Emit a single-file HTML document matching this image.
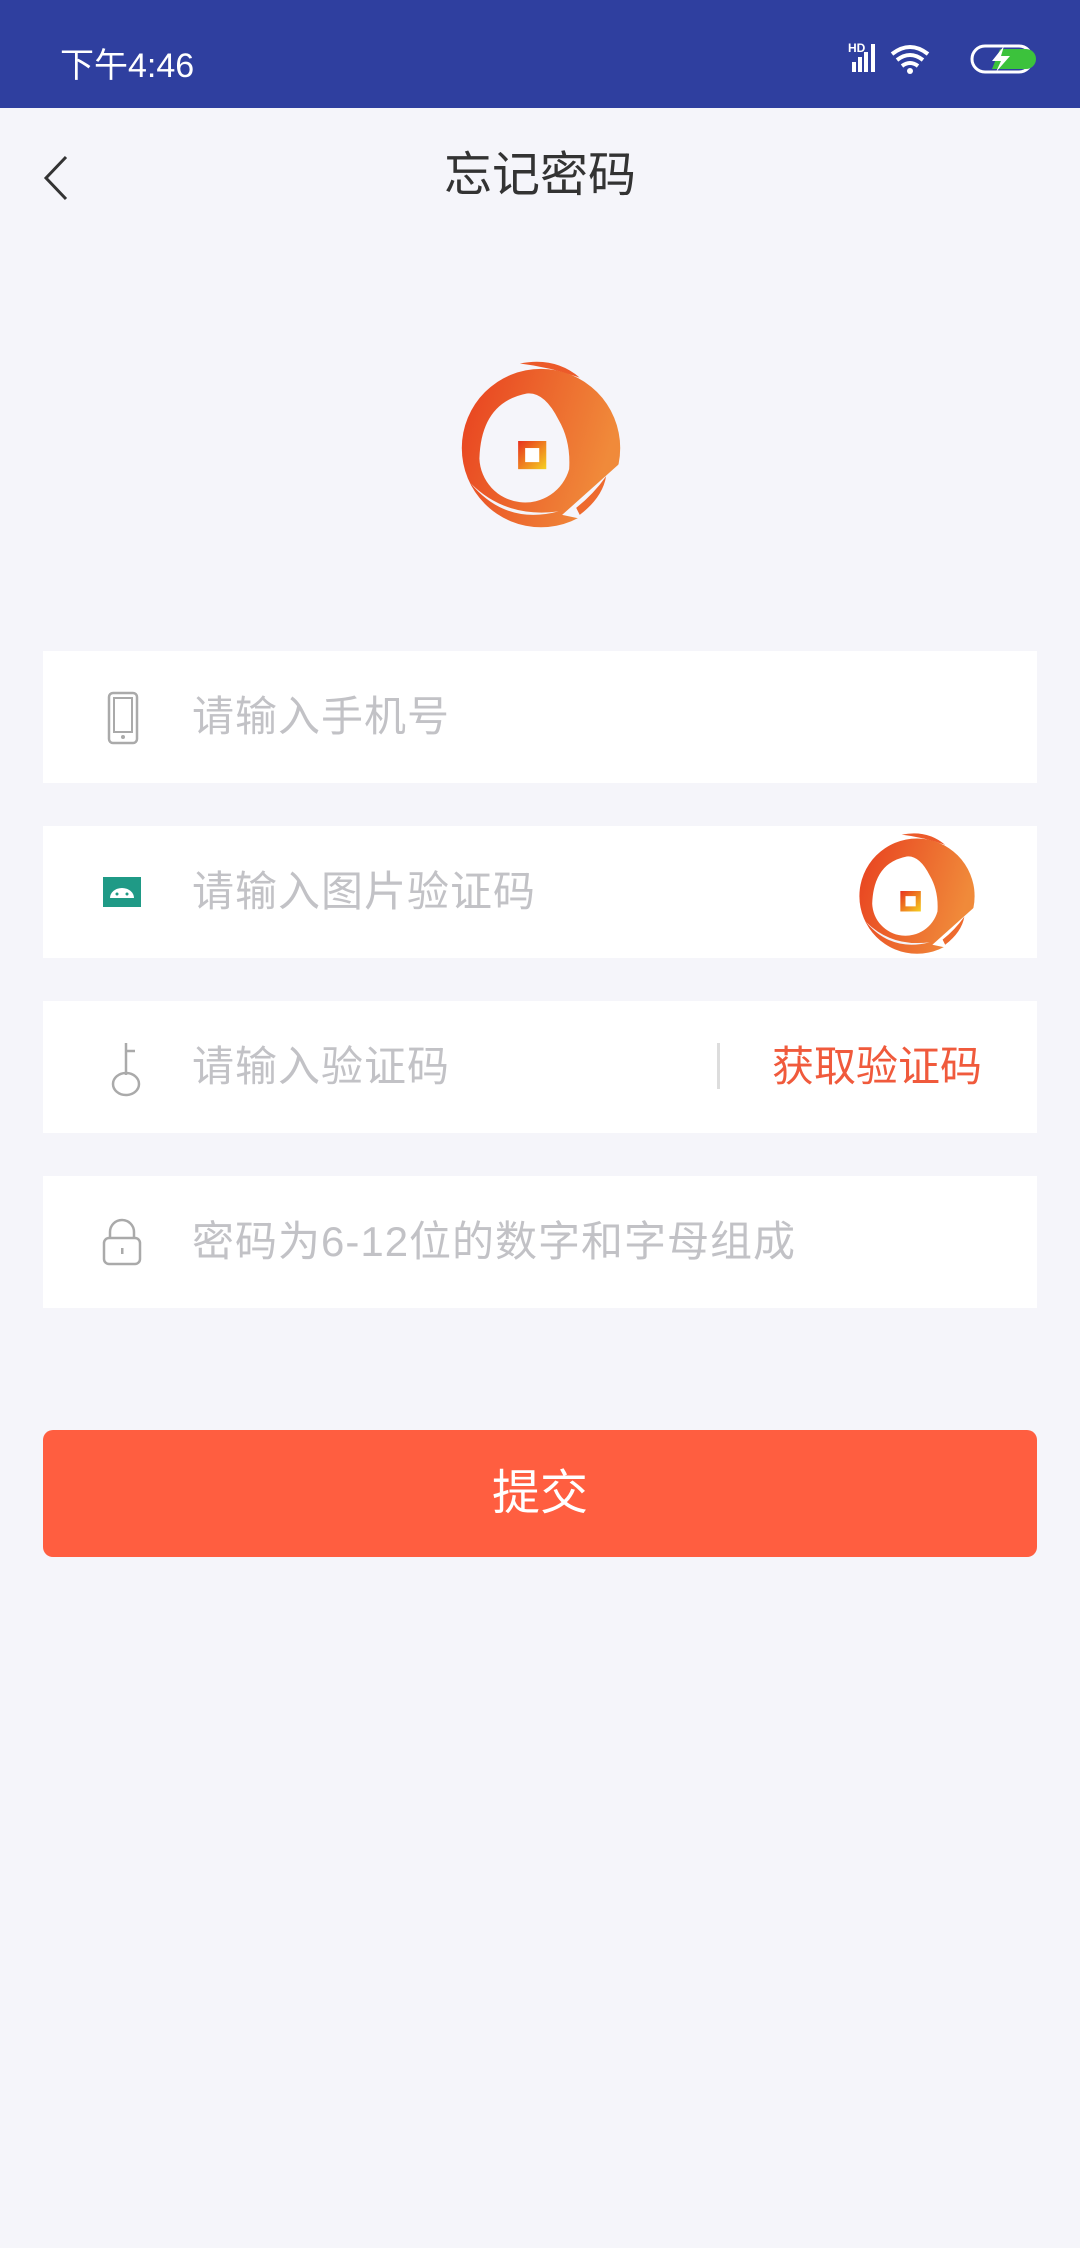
<!DOCTYPE html>
<html><head><meta charset="utf-8">
<style>
body{margin:0;width:1080px;height:2248px;background:#f5f5fa;font-family:"Liberation Sans","Noto Sans CJK SC",sans-serif;position:relative;overflow:hidden}
.abs{position:absolute}
.sb{left:0;top:0;width:1080px;height:108px;background:#2f3f9f}
.field{position:absolute;left:43px;width:994px;height:132px;background:#fff}
.ph{position:absolute;left:149px;top:0;line-height:132px;font-size:42px;color:#c2c2c6;letter-spacing:1px}
.ic{position:absolute}
</style></head><body>
<svg width="0" height="0" style="position:absolute">
<defs>
<linearGradient id="g" x1="0" y1="0" x2="1" y2="0.3"><stop offset="0" stop-color="#e8401f"/><stop offset="1" stop-color="#f08a3a"/></linearGradient>
<linearGradient id="g2" x1="0" y1="0" x2="1" y2="1"><stop offset="0" stop-color="#e8301f"/><stop offset="1" stop-color="#f5d020"/></linearGradient>
<mask id="m"><rect width="100" height="100" fill="#fff"/><path d="M15 60 A26 26 0 0 0 66 66 Q67 50 60 38 Q52 22 42 23 Q16 28 15 60Z" fill="#000"/><path d="M62 92 L100 58 L100 100 Z" fill="#000"/></mask>
<symbol id="logo" viewBox="0 0 100 100">
<g mask="url(#m)"><circle cx="50" cy="54" r="45" fill="url(#g)"/></g>
<path d="M38 6 Q58 2 72 14 Q55 8 38 6Z" fill="#ec5a2a"/>
<path d="M70 88 Q80 80 87 70 Q85 82 72 92Z" fill="#ee6a2e"/>
<path d="M10 74 Q30 94 60 90 Q30 98 10 74Z" fill="#f3f3f8"/>
<rect x="37" y="50" width="16" height="16" fill="url(#g2)"/>
<rect x="41" y="54" width="8" height="8" fill="#fff"/>
</symbol>
</defs></svg>
<div class="abs sb"></div>
<div class="abs" style="left:60px;top:38px;color:#fff;font-size:34px">下午4:46</div>
<svg class="abs" style="left:848px;top:40px" width="200" height="36">
<text x="0" y="12" font-size="12" fill="#fff" font-family="Liberation Sans" font-weight="bold">HD</text>
<rect x="4" y="22" width="4" height="10" fill="#fff"/><rect x="10" y="17" width="4" height="15" fill="#fff"/><rect x="16" y="12" width="4" height="20" fill="#fff"/><rect x="23" y="4" width="4" height="28" fill="#fff"/>
<path d="M44 14 Q62 0 80 14" stroke="#fff" stroke-width="4" fill="none"/><path d="M49 20 Q62 10 75 20" stroke="#fff" stroke-width="4" fill="none"/><path d="M54 26 Q62 20 70 26" stroke="#fff" stroke-width="4" fill="none"/><circle cx="62" cy="31" r="3" fill="#fff"/>
<rect x="124" y="6" width="60" height="26" rx="13" stroke="#fff" stroke-width="3" fill="none"/><path d="M152 9 H178 a10 10 0 0 1 0 20 H144Z" fill="#3cc23c"/><path d="M156 6 L144 21 H153 L148 32 L162 16 H153Z" fill="#fff"/>
</svg>
<svg class="abs" style="left:40px;top:155px" width="30" height="46"><path d="M26 2 L6 23 L26 44" stroke="#333" stroke-width="3" fill="none"/></svg>
<div class="abs" style="left:0;width:1080px;text-align:center;top:146px;font-size:48px;color:#333;line-height:60px">忘记密码</div>
<svg class="abs" style="left:453px;top:353px" width="176" height="176"><use href="#logo"/></svg>

<div class="field" style="top:651px">
<svg class="ic" style="left:64px;top:40px" width="36" height="54"><rect x="2" y="2" width="28" height="50" rx="4" stroke="#aaa" stroke-width="2.5" fill="none"/><rect x="7" y="7" width="18" height="34" stroke="#aaa" stroke-width="2" fill="none"/><circle cx="16" cy="46" r="2" fill="#aaa"/></svg>
<div class="ph">请输入手机号</div></div>

<div class="field" style="top:826px">
<svg class="ic" style="left:60px;top:51px" width="38" height="30"><rect width="38" height="30" fill="#1f9a86"/><path d="M7 21 a12 10 0 0 1 24 0Z" fill="#fff"/><circle cx="14" cy="17" r="1.5" fill="#1f9a86"/><circle cx="24" cy="17" r="1.5" fill="#1f9a86"/></svg>
<div class="ph">请输入图片验证码</div>
<svg class="ic" style="left:810px;top:-1px" width="128" height="132"><use href="#logo"/></svg></div>

<div class="field" style="top:1001px">
<svg class="ic" style="left:64px;top:40px" width="36" height="56"><path d="M19 2 V34 M19 10 H28" stroke="#aaa" stroke-width="2.5" fill="none"/><ellipse cx="19" cy="43" rx="13" ry="11" stroke="#aaa" stroke-width="2.5" fill="none"/></svg>
<div class="ph">请输入验证码</div>
<div class="abs" style="left:674px;top:42px;width:3px;height:46px;background:#ddd"></div>
<div class="abs" style="left:729px;top:0;line-height:132px;font-size:42px;color:#f05a3c">获取验证码</div></div>

<div class="field" style="top:1176px">
<svg class="ic" style="left:58px;top:42px" width="42" height="48"><path d="M9 20 V14 a12 12 0 0 1 24 0 V20" stroke="#aaa" stroke-width="2.5" fill="none"/><rect x="3" y="20" width="36" height="26" rx="5" stroke="#aaa" stroke-width="2.5" fill="none"/><rect x="20" y="30" width="2.5" height="6" fill="#aaa"/></svg>
<div class="ph">密码为6-12位的数字和字母组成</div></div>

<div class="abs" style="left:43px;top:1430px;width:994px;height:127px;background:#ff5e40;border-radius:10px;color:#fff;font-size:48px;text-align:center;line-height:127px">提交</div>
</body></html>
